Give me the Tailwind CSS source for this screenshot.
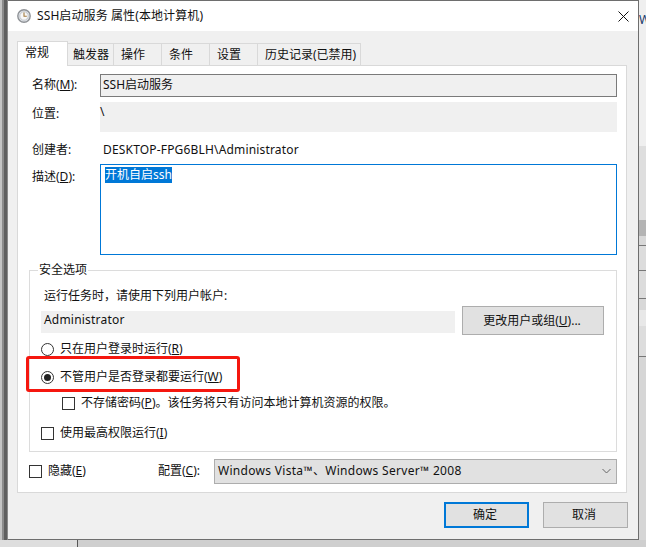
<!DOCTYPE html>
<html lang="zh-CN">
<head>
    <meta charset="UTF-8">
    <title>SSH启动服务 属性(本地计算机)</title>
    <script src="https://cdn.jsdelivr.net/npm/@tailwindcss/browser@4"></script>
</head>
<body class="w-[646px] h-[547px] overflow-hidden bg-[#d4d4d4] text-[12px] leading-[16px] text-[#111] font-['Noto_Sans','Noto_Sans_CJK_SC',sans-serif]">
    <div class="flex h-[540px]">
        <!-- desktop behind the dialog, left -->
        <div class="w-[8px] h-full flex bg-[#a8a8a8]">
            <div class="w-[2px] bg-[#c4c4c4]"></div>
            <div class="w-[2px] bg-[#8c8c8c]"></div>
            <div class="w-[3px] bg-[#5f5f5f]"></div>
            <div class="w-[1px] bg-[#8a8a8a]"></div>
        </div>

        <!-- dialog -->
        <div class="w-[631px] h-full bg-[#f0f0f0] border-r border-b border-t border-[#6e6e6e] flex flex-col">
            <div class="h-[30px] bg-white flex items-center pl-[9px] pr-[9px] shrink-0">
                <svg width="14" height="14" viewBox="0 0 14 14" class="shrink-0">
                    <circle cx="7" cy="7" r="6.2" fill="#dfe3e8" stroke="#8f9296" stroke-width="1.4"/>
                    <circle cx="7" cy="7" r="4.2" fill="#f8f8f8" stroke="#c4c7ca"/>
                    <path d="M7 3.6V7.3H9.8" fill="none" stroke="#a27a3c" stroke-width="1.1"/>
                </svg>
                <span class="ml-[6px] tracking-[0.1px]">SSH启动服务 属性(本地计算机)</span>
                <svg width="11" height="11" viewBox="0 0 11 11" class="ml-auto">
                    <path d="M.5.5 10.5 10.5M10.5.5.5 10.5" stroke="#111" fill="none"/>
                </svg>
            </div>

            <div class="pl-[9px] pt-[10px] flex-1 flex flex-col">
                <!-- tabs -->
                <div class="flex items-end h-[24px] relative z-10">
                    <div class="w-[51px] h-[25px] -mb-px bg-white border border-b-0 border-[#d9d9d9] pl-[7px] pt-[3px]">常规</div>
                    <div class="w-[46px] h-[22px] bg-[#f0f0f0] border-t border-r border-[#d9d9d9] pl-[5px] pt-[3px]">触发器</div>
                    <div class="w-[48px] h-[22px] bg-[#f0f0f0] border-t border-r border-[#d9d9d9] pl-[7px] pt-[3px]">操作</div>
                    <div class="w-[48px] h-[22px] bg-[#f0f0f0] border-t border-r border-[#d9d9d9] pl-[7px] pt-[3px]">条件</div>
                    <div class="w-[48px] h-[22px] bg-[#f0f0f0] border-t border-r border-[#d9d9d9] pl-[7px] pt-[3px]">设置</div>
                    <div class="w-[103px] h-[22px] bg-[#f0f0f0] border-t border-r border-[#d9d9d9] pl-[7px] pt-[3px]">历史记录(已禁用)</div>
                </div>

                <!-- general page -->
                <div class="w-[610px] h-[428px] bg-white border border-[#d9d9d9] pt-[7px] pl-[11px]">
                    <div class="flex h-[24px] items-center">
                        <div class="w-[71px] pl-[3px]">名称(<span class="underline">M</span>):</div>
                        <div class="w-[517px] h-[23px] bg-[#f0f0f0] border border-[#7a7a7a] pl-[2px] leading-[20px]">SSH启动服务</div>
                    </div>
                    <div class="flex mt-[5px]">
                        <div class="w-[71px] pl-[3px] pt-[4px]">位置:</div>
                        <div class="w-[517px] h-[30px] bg-[#f0f0f0] pt-[2px]">\</div>
                    </div>
                    <div class="flex mt-[10px] h-[16px]">
                        <div class="w-[71px] pl-[3px]">创建者:</div>
                        <div class="pl-[3px] tracking-[0.17px]">DESKTOP-FPG6BLH\Administrator</div>
                    </div>
                    <div class="flex mt-[6px]">
                        <div class="w-[71px] pl-[3px] pt-[5px]">描述(<span class="underline">D</span>):</div>
                        <div class="w-[517px] h-[91px] border border-[#0078d7] pl-[4px] pt-[2px]">
                            <span class="inline-block bg-[#0078d7] text-white h-[16px]">开机自启ssh</span>
                        </div>
                    </div>

                    <!-- security options -->
                    <fieldset class="w-[588px] h-[188px] mt-[9px] border border-[#dcdcdc] relative">
                        <legend class="ml-[8px] px-[1px] bg-white leading-[12px]">安全选项</legend>
                        <div class="pl-[14px] mt-[12px]">运行任务时，请使用下列用户帐户:</div>
                        <div class="flex items-start pl-[11px] mt-[5px]">
                            <div class="w-[414px] h-[22px] mt-[2px] bg-[#f0f0f0] pl-[3px] leading-[18px] tracking-[0.2px]">Administrator</div>
                            <div class="w-[142px] h-[29px] ml-[7px] -mt-[3px] bg-[#e1e1e1] border border-[#adadad] text-center pr-[2px] leading-[27px]">更改用户或组(<span class="underline">U</span>)...</div>
                        </div>
                        <div class="flex items-center h-[16px] pl-[11px] mt-[6px]">
                            <span class="w-[13px] h-[13px] rounded-full border border-[#333] bg-white"></span>
                            <span class="ml-[6px]">只在用户登录时运行(<span class="underline">R</span>)</span>
                        </div>
                        <div class="flex items-center h-[16px] pl-[11px] mt-[12px]">
                            <span class="w-[13px] h-[13px] rounded-full border border-[#333] bg-white flex items-center justify-center">
                                <span class="w-[7px] h-[7px] rounded-full bg-[#222]"></span>
                            </span>
                            <span class="ml-[6px]">不管用户是否登录都要运行(<span class="underline">W</span>)</span>
                        </div>
                        <div class="flex items-center h-[16px] pl-[32px] mt-[10px]">
                            <span class="w-[13px] h-[13px] border border-[#333] bg-white"></span>
                            <span class="ml-[6px]">不存储密码(<span class="underline">P</span>)。该任务将只有访问本地计算机资源的权限。</span>
                        </div>
                        <div class="flex items-center h-[16px] pl-[11px] mt-[14px]">
                            <span class="w-[13px] h-[13px] border border-[#333] bg-white"></span>
                            <span class="ml-[6px]">使用最高权限运行(<span class="underline">I</span>)</span>
                        </div>
                        <!-- annotation -->
                        <div class="absolute left-[-4px] top-[80px] w-[214px] h-[36px] border-[3px] border-[#f5170f] rounded-[3px]"></div>
                    </fieldset>

                    <!-- hidden + configure -->
                    <div class="flex items-center h-[26px] mt-[6px]">
                        <span class="w-[13px] h-[13px] border border-[#333] bg-white"></span>
                        <span class="ml-[6px] w-[110px]">隐藏(<span class="underline">E</span>)</span>
                        <span class="w-[56px]">配置(<span class="underline">C</span>):</span>
                        <div class="w-[403px] h-[25px] bg-[#e1e1e1] border border-[#adadad] flex items-center pl-[3px] pr-[5px]">
                            <span class="tracking-[0.3px]">Windows Vista™、Windows Server™ 2008</span>
                            <svg width="9" height="6" viewBox="0 0 9 6" class="ml-auto"><path d="M.5 1 4.5 5 8.5 1" fill="none" stroke="#666"/></svg>
                        </div>
                    </div>
                </div>

                <!-- footer buttons -->
                <div class="flex mt-[9px] pl-[427px]">
                    <div class="w-[85px] h-[26px] bg-[#e1e1e1] border-2 border-[#0078d7] text-center pr-[3px] leading-[22px]">确定</div>
                    <div class="w-[85px] h-[26px] ml-[14px] bg-[#e1e1e1] border border-[#adadad] text-center pr-[3px] leading-[24px]">取消</div>
                </div>
            </div>
        </div>

        <!-- desktop behind the dialog, right -->
        <div class="w-[7px] h-full overflow-hidden flex flex-col">
            <div class="h-[146px] bg-[#efefef] text-[#1a3a6a] pt-[12px]">W</div>
            <div class="h-[74px] bg-[#dedede]"></div>
            <div class="h-[16px] bg-[#b4b4b4]"></div>
            <div class="h-[10px] bg-[#d8d8d8] border-b border-[#777]"></div>
            <div class="h-[25px] bg-[#dcdcdc] border-b border-[#777]"></div>
            <div class="h-[28px] bg-[#dcdcdc] border-b border-[#777]"></div>
            <div class="h-[11px] bg-[#d8d8d8]"></div>
            <div class="h-[16px] bg-[#e8e8e8]"></div>
            <div class="h-[31px] bg-[#dddddd] border-b border-[#777]"></div>
            <div class="flex-1 bg-[#d6d6d6]"></div>
        </div>
    </div>
    <!-- bottom edge -->
    <div class="flex h-[7px]">
        <div class="w-[78px] bg-[#dedede] border-r border-[#555]"></div>
        <div class="flex-1 bg-[#cfcfcf]"></div>
    </div>
</body>
</html>
